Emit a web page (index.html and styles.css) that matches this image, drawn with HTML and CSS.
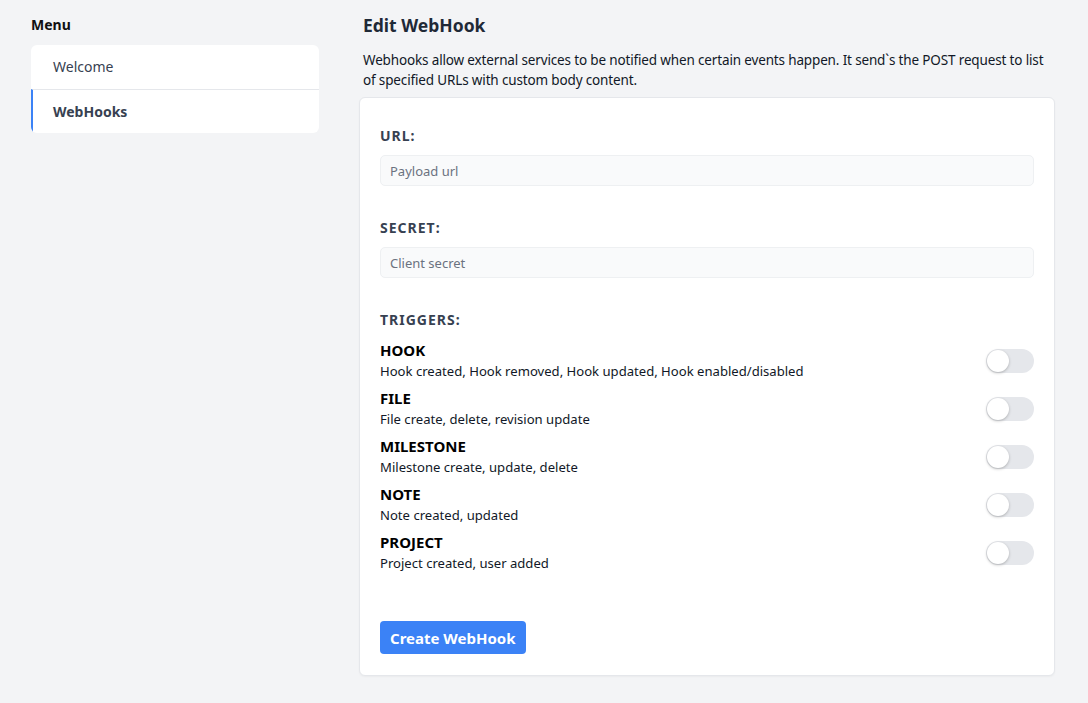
FILE: index.html
```html
<!DOCTYPE html>
<html lang="en">
<head>
<meta charset="utf-8">
<title>Edit WebHook</title>
<link rel="stylesheet" href="styles.css">
</head>
<body>
<div class="layout">
  <aside class="sidebar">
    <h3 class="menu-title">Menu</h3>
    <nav class="menu">
      <a class="menu-item">Welcome</a>
      <a class="menu-item active">WebHooks</a>
    </nav>
  </aside>
  <main class="main">
    <h1 class="title">Edit WebHook</h1>
    <p class="intro">Webhooks allow external services to be notified when certain events happen. It send`s the POST request to list of specified URLs with custom body content.</p>
    <section class="card">
      <div class="field">
        <label class="label">URL:</label>
        <input class="input" type="text" placeholder="Payload url">
      </div>
      <div class="field">
        <label class="label">SECRET:</label>
        <input class="input" type="text" placeholder="Client secret">
      </div>
      <div class="field">
        <label class="label">TRIGGERS:</label>
        <div class="triggers">
          <div class="trigger">
            <div class="trigger-text"><div class="trigger-name">HOOK</div><div class="trigger-desc">Hook created, Hook removed, Hook updated, Hook enabled/disabled</div></div>
            <span class="toggle"><span class="knob"></span></span>
          </div>
          <div class="trigger">
            <div class="trigger-text"><div class="trigger-name">FILE</div><div class="trigger-desc">File create, delete, revision update</div></div>
            <span class="toggle"><span class="knob"></span></span>
          </div>
          <div class="trigger">
            <div class="trigger-text"><div class="trigger-name">MILESTONE</div><div class="trigger-desc">Milestone create, update, delete</div></div>
            <span class="toggle"><span class="knob"></span></span>
          </div>
          <div class="trigger">
            <div class="trigger-text"><div class="trigger-name">NOTE</div><div class="trigger-desc">Note created, updated</div></div>
            <span class="toggle"><span class="knob"></span></span>
          </div>
          <div class="trigger">
            <div class="trigger-text"><div class="trigger-name">PROJECT</div><div class="trigger-desc">Project created, user added</div></div>
            <span class="toggle"><span class="knob"></span></span>
          </div>
        </div>
      </div>
      <button class="btn" type="button">Create WebHook</button>
    </section>
  </main>
</div>
</body>
</html>
```
FILE: styles.css
```css
* { box-sizing: border-box; }
html, body { margin: 0; padding: 0; }
body {
  background: #f3f4f6;
  font-family: "Noto Sans", "Open Sans", sans-serif;
  color: #1f2937;
  font-size: 14px;
  line-height: 20px;
}
.layout {
  display: flex;
  padding: 14px 33px 28px 31px;
  gap: 40px;
}
.sidebar { width: 288px; flex-shrink: 0; }
.menu-title {
  margin: 0 0 10px;
  font-size: 14px;
  line-height: 21px;
  font-weight: 700;
  color: #111;
}
.menu {
  background: #fff;
  border-radius: 6px;
  overflow: hidden;
  display: flex;
  flex-direction: column;
}
.menu-item {
  display: block;
  height: 44px;
  line-height: 44px;
  padding-left: 22px;
  color: #374151;
  font-size: 14px;
}
.menu-item + .menu-item { border-top: 1px solid #e5e7eb; height: 44px; line-height: 43px; }
.menu-item.active {
  border-left: 2px solid #3b82f6;
  padding-left: 20px;
  font-weight: 700;
}
.main { flex: 1; display: flex; flex-direction: column; }
.title {
  margin: 0 0 0 4px;
  font-size: 17.5px;
  line-height: 22px;
  font-weight: 700;
  color: #1f2937;
}
.intro {
  margin: 14px 10px 7px 4px;
  font-size: 13.5px;
  letter-spacing: -0.15px;
  line-height: 20px;
  color: #111827;
}
.card {
  background: #fff;
  border: 1px solid #e5e7eb;
  border-radius: 6px;
  box-shadow: 0 1px 2px rgba(0,0,0,0.04);
  padding: 28px 20px 21px;
  display: flex;
  flex-direction: column;
  align-items: flex-start;
}
.field { width: 100%; display: flex; flex-direction: column; }
.field + .field { margin-top: 32px; }
.label {
  font-size: 14px;
  line-height: 20px;
  font-weight: 700;
  letter-spacing: 1px;
  color: #374151;
  margin-bottom: 9px;
}
.input {
  width: 100%;
  height: 31px;
  border: 1px solid #eef0f2;
  background: #f9fafb;
  border-radius: 5px;
  padding: 0 9px;
  font-family: inherit;
  font-size: 13px;
  color: #374151;
  outline: none;
}
.input::placeholder { color: #6b7280; }
.triggers { display: flex; flex-direction: column; gap: 6px; margin-top: 1px; }
.trigger { display: flex; align-items: center; justify-content: space-between; }
.trigger-name { font-size: 15px; line-height: 20px; font-weight: 700; color: #000; }
.trigger-desc { font-size: 13.1px; line-height: 22px; color: #111827; }
.toggle {
  position: relative;
  width: 48px;
  height: 24px;
  border-radius: 12px;
  background: #e5e7eb;
  flex-shrink: 0;
}
.knob {
  position: absolute;
  left: 1px;
  top: 1px;
  width: 22px;
  height: 22px;
  border-radius: 50%;
  background: #fff;
  box-shadow: 0 1px 3px rgba(0,0,0,0.25);
}
.btn {
  margin-top: 47px;
  height: 33px;
  padding: 0 10px;
  border: none;
  border-radius: 4px;
  background: #3b82f6;
  color: #fff;
  font-family: inherit;
  font-size: 15px;
  font-weight: 700;
}
```
